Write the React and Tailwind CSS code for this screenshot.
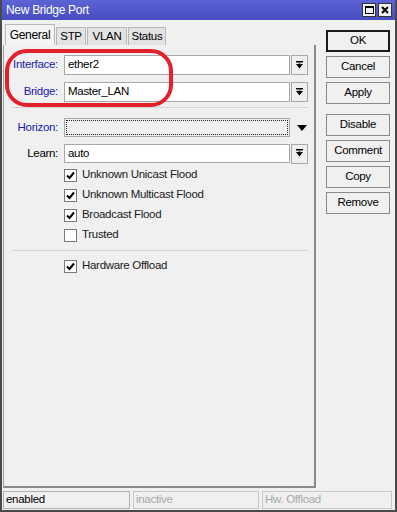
import React from "react";

const font = { fontFamily: '"Liberation Sans", Arial, sans-serif' };

function DropBtn() {
  return (
    <div className="w-[17px] h-[20px] border border-[#a8a8a8] bg-[#f0f0f0] flex items-center justify-center shrink-0">
      <svg width="9" height="9" viewBox="0 0 9 9">
        <rect x="1" y="0" width="7" height="1.5" fill="#000" />
        <polygon points="1,3 8,3 4.5,7.5" fill="#000" />
        <rect x="3.5" y="2.5" width="2" height="2" fill="#000" />
      </svg>
    </div>
  );
}

function Check({ checked, label }) {
  return (
    <div className="h-[20px] flex items-center">
      <div className="w-[13px] h-[13px] border border-[#7a7a7a] bg-white flex items-center justify-center shrink-0">
        {checked && (
          <svg width="9" height="9" viewBox="0 0 9 9">
            <path d="M1 4.5 L3.5 7 L8 1.5" stroke="#000" strokeWidth="2" fill="none" />
          </svg>
        )}
      </div>
      <span className="ml-[5px] text-[#1a1a1a]">{label}</span>
    </div>
  );
}

function Btn({ children, primary }) {
  return (
    <div
      className={
        "w-[64px] h-[22px] flex items-center justify-center bg-[#f0f0f0] " +
        (primary ? "border-2 border-[#1a1a1a]" : "border border-[#8a8a8a]")
      }
    >
      {children}
    </div>
  );
}

export default function App() {
  return (
    <div
      className="relative w-[397px] h-[512px] bg-[#f0f0f0] border-x-2 border-b-2 border-[#4a4a4a] flex flex-col text-[11.5px] tracking-[-0.3px] text-black overflow-hidden"
      style={font}
    >
      {/* title bar */}
      <div className="h-[20px] -mx-[2px] bg-gradient-to-b from-[#5c63d4] to-[#474dc2] flex items-center pl-[6px] pr-[5px] shrink-0">
        <span className="text-white text-[12px]">New Bridge Port</span>
        <div className="ml-auto flex gap-[2px]">
          <div className="w-[14px] h-[14px] bg-[#f0f0f0] border border-[#333] flex items-center justify-center">
            <div className="w-[9px] h-[8px] border border-black border-t-2" />
          </div>
          <div className="w-[14px] h-[14px] bg-[#f0f0f0] border border-[#333] flex items-center justify-center">
            <svg width="8" height="8" viewBox="0 0 8 8">
              <path d="M1 1 L7 7 M7 1 L1 7" stroke="#000" strokeWidth="2" />
            </svg>
          </div>
        </div>
      </div>

      <div className="flex flex-1">
        {/* left */}
        <div className="w-[314px] flex flex-col">
          {/* tabs */}
          <div className="h-[25px] flex items-end pl-[3px] shrink-0">
            <div className="h-[21px] w-[50px] border border-b-0 border-[#b8b8b8] bg-[#f4f4f4] flex items-center justify-center text-[12px]">
              General
            </div>
            <div className="h-[18px] w-[30px] ml-[1px] border border-b-0 border-[#b8b8b8] bg-[#e3e3e3] flex items-center justify-center">
              STP
            </div>
            <div className="h-[18px] w-[40px] ml-[1px] border border-b-0 border-[#b8b8b8] bg-[#e3e3e3] flex items-center justify-center">
              VLAN
            </div>
            <div className="h-[18px] w-[38px] ml-[1px] border border-b-0 border-[#b8b8b8] bg-[#e3e3e3] flex items-center justify-center">
              Status
            </div>
          </div>
          {/* panel */}
          <div className="flex-1 ml-[1px] border-l border-r-2 border-b-2 border-[#a0a0a0] border-r-[#8a8a8a] border-b-[#8a8a8a] flex flex-col pt-[10px]">
            <div className="flex items-center h-[20px]">
              <div className="w-[54px] text-right text-[#1a1ab0]">Interface:</div>
              <div className="ml-[6px] w-[226px] h-[20px] border border-[#a8a8a8] bg-white flex items-center pl-[3px]">ether2</div>
              <div className="ml-[1px]"><DropBtn /></div>
            </div>
            <div className="flex items-center h-[20px] mt-[7px]">
              <div className="w-[54px] text-right text-[#1a1ab0]">Bridge:</div>
              <div className="ml-[6px] w-[226px] h-[20px] border border-[#a8a8a8] bg-white flex items-center pl-[3px]">Master_LAN</div>
              <div className="ml-[1px]"><DropBtn /></div>
            </div>
            <div className="mt-[5px] ml-[8px] w-[296px] h-[1px] bg-[#d4d4d4]" />
            <div className="flex items-center h-[19px] mt-[10px]">
              <div className="w-[54px] text-right text-[#1a1ab0]">Horizon:</div>
              <div className="ml-[6px] w-[226px] h-[19px] border border-[#a8a8a8] bg-[#f0f0f0] p-[1px]">
                <div className="w-full h-full border border-dotted border-[#222]" />
              </div>
              <div className="ml-[6px] w-[12px] flex justify-center">
                <svg width="10" height="6" viewBox="0 0 10 6">
                  <polygon points="0,0 10,0 5,6" fill="#000" />
                </svg>
              </div>
            </div>
            <div className="flex items-center h-[19px] mt-[7px]">
              <div className="w-[54px] text-right">Learn:</div>
              <div className="ml-[6px] w-[226px] h-[19px] border border-[#a8a8a8] bg-white flex items-center pl-[3px]">auto</div>
              <div className="ml-[1px]"><DropBtn /></div>
            </div>
            <div className="ml-[60px] mt-[2px] flex flex-col">
              <Check checked label="Unknown Unicast Flood" />
              <Check checked label="Unknown Multicast Flood" />
              <Check checked label="Broadcast Flood" />
              <Check label="Trusted" />
            </div>
            <div className="mt-[5px] ml-[8px] w-[296px] h-[1px] bg-[#d4d4d4]" />
            <div className="ml-[60px] mt-[5px]">
              <Check checked label="Hardware Offload" />
            </div>
          </div>
        </div>
        {/* right buttons */}
        <div className="flex flex-col pt-[10px] ml-[10px] gap-[4px]">
          <Btn primary>OK</Btn>
          <Btn>Cancel</Btn>
          <Btn>Apply</Btn>
          <div className="h-[2px]" />
          <Btn>Disable</Btn>
          <Btn>Comment</Btn>
          <Btn>Copy</Btn>
          <Btn>Remove</Btn>
        </div>
      </div>

      {/* status bar */}
      <div className="h-[22px] flex items-start gap-[3px] pt-[3px] pl-[1px] pr-[3px] shrink-0">
        <div className="w-[127px] h-[18px] border border-[#b0b0b0] flex items-center pl-[2px]">enabled</div>
        <div className="w-[126px] h-[18px] border border-[#c8c8c8] flex items-center pl-[2px] text-[#a8a8a8]">inactive</div>
        <div className="flex-1 h-[18px] border border-[#c8c8c8] flex items-center pl-[2px] text-[#a8a8a8]">Hw. Offload</div>
      </div>

      {/* red highlight */}
      <div className="absolute left-[3px] top-[49px] w-[168px] h-[58px] border-[4px] border-[#e3212b] rounded-[22px] pointer-events-none" />
    </div>
  );
}
